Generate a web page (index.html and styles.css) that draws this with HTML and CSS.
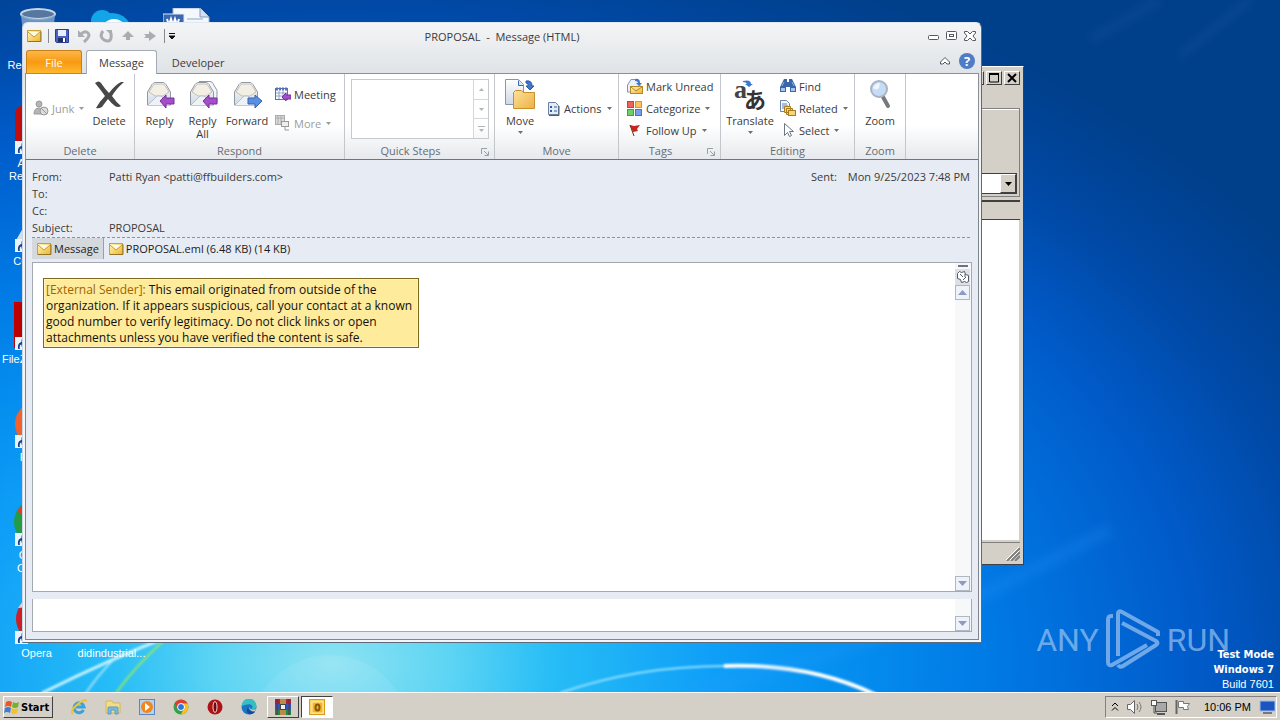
FILE: index.html
```html
<!DOCTYPE html>
<html lang="en">
<head>
    <meta charset="UTF-8">
    <meta name="viewport" content="width=device-width, initial-scale=1.0">
    <title>PROPOSAL - Message (HTML)</title>
    <link rel="stylesheet" href="styles.css">
</head>
<body>
    <!-- shared icons -->
    <svg class="sprite" aria-hidden="true">
        <defs>
            <linearGradient id="gold" x1="0" y1="0" x2="1" y2="1">
                <stop offset="0" stop-color="#fff6c4"/>
                <stop offset="1" stop-color="#f0b429"/>
            </linearGradient>
            <linearGradient id="paper" x1="0" y1="0" x2="0" y2="1">
                <stop offset="0" stop-color="#ffffff"/>
                <stop offset="1" stop-color="#cfd8e4"/>
            </linearGradient>
            <linearGradient id="folder" x1="0" y1="0" x2="1" y2="1">
                <stop offset="0" stop-color="#fde29a"/>
                <stop offset="1" stop-color="#eeb044"/>
            </linearGradient>
            <symbol id="mail" viewBox="0 0 16 16">
                <rect x="1.500" y="2.500" width="13" height="11" fill="url(#gold)" stroke="#c9a23c"/>
                <path d="M2 4l6 5 6-5" fill="#fffbe0" stroke="#c89a2c"/>
                <path d="M2 13.500h13v-10" stroke="#8f7428" fill="none"/>
            </symbol>
            <symbol id="down" viewBox="0 0 5 3">
                <path d="M0 0h5L2.500 3z" fill="currentColor"/>
            </symbol>
            <symbol id="open-mail" viewBox="0 0 32 32">
                <path d="M3.500 13L8 5.500Q9 4 11 3.500h8q2 .5 3 2l4.500 7.500v13h-23z" fill="url(#paper)" stroke="#8e98a5"/>
                <path d="M5 13l4-6.500q1-1.500 3-1.500h6q2 0 3 1.500l4 6.500-6 4h-8z" fill="#f3efe4" stroke="#c4bfb0"/>
                <path d="M4 26l9-9h4l9 9" fill="#eef2f7" stroke="#b6c0cd"/>
            </symbol>
            <symbol id="launcher" viewBox="0 0 8 8">
                <path d="M.5 6V.5H6M3 3l4 4M7.500 3.500v4h-4" fill="none" stroke="currentColor"/>
            </symbol>
            <symbol id="shortcut" viewBox="0 0 12 12">
                <rect width="12" height="12" fill="#e8f4fc"/>
                <path d="M3 11C2 7 4 5 6 4.500V2l4.500 3.500L6 9V7C4.500 7 4 9 4.500 11z" fill="#173c8c"/>
            </symbol>
        </defs>
    </svg>

    <main class="desktop">
        <svg class="wallpaper" viewBox="0 0 1280 693" preserveAspectRatio="none" aria-hidden="true">
            <defs>
                <filter id="soft"><feGaussianBlur stdDeviation="1"/></filter>
                <filter id="glow"><feGaussianBlur stdDeviation="5"/></filter>
            </defs>
            <circle cx="330" cy="736" r="80" fill="#fff" opacity=".08"/>
            <g fill="none" stroke="#c8f4ff" filter="url(#soft)">
                <path d="M172 636Q110 660 42 694" stroke-width="3"/>
                <path d="M116 658Q98 676 86 694" stroke-width="2" opacity=".7"/>
                <path d="M168 638Q138 664 116 694" stroke="#8fe86a" stroke-width="2"/>
                <path d="M560 694Q640 666 732 667" stroke="#8fe0ff" stroke-width="2"/>
                <path d="M724 667Q810 664 876 696" stroke="#fff" stroke-width="4"/>
            </g>
            <g fill="none" stroke="#2f9bff" filter="url(#glow)" opacity=".18">
                <path d="M690 694Q820 660 900 630T1110 530" stroke-width="14"/>
                <path d="M1180 56L1250 0" stroke="#8cb8e0" stroke-width="3"/>
                <path d="M1090 40L1160 0" stroke="#3a70b4" stroke-width="8"/>
            </g>
        </svg>

        <div class="icons">
            <div class="shortcut">
                <svg viewBox="0 0 48 48"><ellipse cx="25" cy="6" rx="17" ry="5" fill="#56779f" stroke="#c8d6e4" stroke-width="2"/><path d="M8 7l4 38q13 5 26 0l4-38q-17 8-34 0z" fill="#7fa3c8" opacity=".85"/></svg>
                <span>Recycle Bin</span>
            </div>
            <div class="shortcut">
                <svg viewBox="0 0 48 48"><rect x="2" y="0" width="44" height="46" rx="7" fill="#c00d0d"/><use href="#shortcut" x="2" y="35" width="13" height="13"/></svg>
                <span>Acrobat Reader DC</span>
            </div>
            <div class="shortcut">
                <svg viewBox="0 0 48 48"><path d="M2 38L10 24h30l6 14z" fill="#d7dde2"/><use href="#shortcut" x="2" y="35" width="13" height="13"/></svg>
                <span>CCleaner</span>
            </div>
            <div class="shortcut">
                <svg viewBox="0 0 48 48"><rect x="1" y="0" width="46" height="46" fill="#bf0000"/><use href="#shortcut" x="2" y="35" width="13" height="13"/></svg>
                <span>FileZilla Client</span>
            </div>
            <div class="shortcut">
                <svg viewBox="0 0 48 48"><circle cx="25" cy="24" r="23" fill="#f2622c"/><use href="#shortcut" x="2" y="35" width="13" height="13"/></svg>
                <span>Firefox</span>
            </div>
            <div class="shortcut">
                <svg viewBox="0 0 48 48"><circle cx="24" cy="24" r="23" fill="#259b45"/><path d="M4 13Q13 0 24 1q15 0 20 12H24q-8 0-11 8z" fill="#e33b2e"/><use href="#shortcut" x="2" y="35" width="13" height="13"/></svg>
                <span>Google Chrome</span>
            </div>
            <div class="shortcut">
                <svg viewBox="0 0 48 48"><ellipse cx="25" cy="23" rx="22" ry="23" fill="#cc2027"/><path d="M5 12Q12 0 25 0v10z" fill="#f3c9c9"/><use href="#shortcut" x="2" y="35" width="13" height="13"/></svg>
                <span>Opera</span>
            </div>
            <div class="shortcut">
                <svg viewBox="0 0 48 48"><circle cx="24" cy="25" r="20" fill="#12a5e8"/><circle cx="14" cy="13" r="11" fill="#12a5e8"/><circle cx="26" cy="24" r="13" fill="#fff"/></svg>
            </div>
            <div class="shortcut last-row">
                <svg viewBox="0 0 48 48"></svg>
                <span>didindustrial...</span>
            </div>
            <div class="shortcut third">
                <svg viewBox="0 0 48 48"><path d="M10 0h27l9 9v37H10z" fill="#f4f8fd" stroke="#9db4d4"/><path d="M37 0v9h9" fill="#d4e0f0" stroke="#7f98bd"/><rect x="0" y="6" width="21" height="20" fill="#3c66b0" stroke="#dce7f6"/><path d="M4 11l2 6 2-6 2 6 2-6 2 6 2-6" fill="none" stroke="#fff" stroke-width="2"/><path d="M24 11h16" stroke="#8ea5c6"/></svg>
            </div>
        </div>

        <section class="classic-window">
            <div class="classic-title">
                <button type="button" aria-label="Minimize"><svg viewBox="0 0 12 10"><path d="M2 8h6" stroke="#000" stroke-width="2"/></svg></button>
                <button type="button" aria-label="Maximize"><svg viewBox="0 0 12 10"><path d="M1.500 1h9v8h-9z" fill="none" stroke="#000"/><path d="M1 1h10" stroke="#000" stroke-width="2"/></svg></button>
                <button type="button" aria-label="Close"><svg viewBox="0 0 12 10"><path d="M2 1l8 8M10 1L2 9" stroke="#000" stroke-width="2"/></svg></button>
            </div>
            <div class="classic-panel">
                <div class="combo">
                    <select aria-label="Address"><option></option></select>
                    <span class="combo-arrow"><svg viewBox="0 0 7 4"><path d="M0 0h7L3.500 4z"/></svg></span>
                </div>
            </div>
            <div class="classic-columns"></div>
            <div class="classic-list"></div>
            <div class="classic-status"><svg viewBox="0 0 14 14"><path d="M1 14L14 1M5 14l9-9M9 14l5-5" stroke="#808080" stroke-width="2"/><path d="M0 13L13 0M4 13l9-9" stroke="#fff"/></svg></div>
        </section>

        <section class="window">
            <header class="titlebar">
                <div class="quick-access">
                    <svg class="icon16" viewBox="0 0 16 16"><use href="#mail"/></svg>
                    <span class="divider"></span>
                    <button type="button" aria-label="Save"><svg class="icon16" viewBox="0 0 16 16"><path d="M1.500 1.500h13v13h-12l-1-1z" fill="#4b62c4" stroke="#2b3c92"/><rect x="4" y="2" width="8" height="6" fill="#e6efff"/><rect x="4" y="10" width="8" height="4" fill="#222d62"/><rect x="9" y="10" width="2" height="4" fill="#fff"/></svg></button>
                    <button type="button" aria-label="Undo"><svg class="icon16" viewBox="0 0 16 16"><path d="M5 6q4-4 7-1t-4 9" fill="none" stroke="#a9adb2" stroke-width="3"/><path d="M2 2v7h7z" fill="#a9adb2"/></svg></button>
                    <button type="button" aria-label="Redo"><svg class="icon16" viewBox="0 0 16 16"><path d="M5 3q-3 4-1 7t6 3 3-8" fill="none" stroke="#a9adb2" stroke-width="3"/><path d="M8 2h6v6z" fill="#a9adb2"/></svg></button>
                    <button type="button" aria-label="Previous item"><svg class="icon16" viewBox="0 0 16 16"><path d="M8 3l6 6h-4v3H6V9H2z" fill="#a9adb2"/></svg></button>
                    <button type="button" aria-label="Next item"><svg class="icon16" viewBox="0 0 16 16"><path d="M2 6h5V3l7 5-7 5v-3H2l2-2z" fill="#a9adb2"/></svg></button>
                    <span class="divider"></span>
                    <button type="button" class="customize" aria-label="Customize"><svg viewBox="0 0 8 8"><path d="M1 1.500h6M1 4h6L4 7z" fill="#111" stroke="#111"/></svg></button>
                </div>
                <h1>PROPOSAL&nbsp; -&nbsp; Message (HTML)</h1>
                <div class="window-buttons">
                    <button type="button" aria-label="Minimize"><svg viewBox="0 0 12 12"><rect x=".5" y="5.500" width="10" height="4" rx="1" fill="#fff" stroke="#535a63"/></svg></button>
                    <button type="button" aria-label="Maximize"><svg viewBox="0 0 12 12"><rect x=".5" y="1.500" width="10" height="8" rx="1" fill="#fff" stroke="#535a63"/><rect x="3.500" y="4.500" width="4" height="2" fill="#fff" stroke="#535a63"/></svg></button>
                    <button type="button" aria-label="Close"><svg viewBox="0 0 12 12"><path d="M.5 1.500h3L6 4l2.500-2.500h3V3L9 6l2.500 3v1.500h-3L6 8l-2.500 2.500h-3V9L3 6 .5 3z" fill="#fff" stroke="#535a63"/></svg></button>
                </div>
            </header>

            <nav class="tabs">
                <button type="button" class="tab file">File</button>
                <button type="button" class="tab active">Message</button>
                <button type="button" class="tab">Developer</button>
                <div class="tab-tools">
                    <button type="button" aria-label="Collapse ribbon"><svg viewBox="0 0 10 8"><path d="M.5 5L5 .500 9.500 5v2H7L5 5 3 7H.5z" fill="#fff" stroke="#535a63"/></svg></button>
                    <button type="button" class="help" aria-label="Help">?</button>
                </div>
            </nav>

            <div class="ribbon">
                <section class="group g-delete">
                    <div class="tools">
                        <button type="button" class="small disabled"><svg class="icon16" viewBox="0 0 16 16"><circle cx="6" cy="4" r="3" fill="#b5b5b5" stroke="#999"/><path d="M1 14q0-6 5-6 4 0 5 6z" fill="#b5b5b5" stroke="#999"/><circle cx="11" cy="11" r="4" fill="#ddd" stroke="#999"/><path d="M8 8l6 6" stroke="#999"/></svg>Junk<svg class="arrow"><use href="#down"/></svg></button>
                        <button type="button" class="large"><svg viewBox="0 0 32 32"><path d="M2 4q4-3 6 0 4 6 8 10Q22 6 28 3l3 0Q23 10 19 17q4 6 9 10-3 2-6 0-4-3-7-7-4 5-6 8-4 2-6 1 4-7 9-12Q7 10 2 4z" fill="#484848"/></svg>Delete</button>
                    </div>
                    <h2>Delete</h2>
                </section>
                <section class="group g-respond">
                    <div class="tools">
                        <button type="button" class="large"><svg viewBox="0 0 32 32"><use href="#open-mail"/><path d="M16 22l6-6v3h8v6h-8v4z" fill="#a24fc8" stroke="#7a2fa0"/></svg>Reply</button>
                        <button type="button" class="large"><svg viewBox="0 0 32 32"><path d="M12 2.500h11q2 0 3 2l4 7v12h-6V12l-6-8z" fill="#f4f6f9" stroke="#8e98a5"/><use href="#open-mail"/><path d="M16 22l6-6v3h8v6h-8v4z" fill="#a24fc8" stroke="#7a2fa0"/></svg>Reply All</button>
                        <button type="button" class="large forward"><svg viewBox="0 0 32 32"><use href="#open-mail"/><path d="M31 22l-7-6v3h-7v6h7v4z" fill="#5b8fe0" stroke="#3463b4"/></svg>Forward</button>
                        <div class="stack spread">
                            <button type="button" class="small"><svg class="icon16" viewBox="0 0 16 16"><rect x=".5" y="2.500" width="12" height="11" fill="#fff" stroke="#5a6fb4"/><path d="M1 3h11" stroke="#5a6fb4" stroke-width="3" stroke-dasharray="2 1"/><path d="M1 7h11M1 10h11M4 5v8M8 5v8" stroke="#8fa0d4"/><path d="M7 11l4-4v2h5v4h-5v2z" fill="#a24fc8" stroke="#7a2fa0"/></svg>Meeting</button>
                            <button type="button" class="small disabled"><svg class="icon16" viewBox="0 0 16 16"><rect x=".5" y=".5" width="9" height="9" fill="#ddd" stroke="#aaa"/><path d="M1 3h8M3 1v8M6 1v8" stroke="#aaa"/><rect x="6.500" y="6.500" width="7" height="5" fill="#eee" stroke="#999"/><path d="M10 12v3h4" fill="none" stroke="#999"/></svg>More<svg class="arrow"><use href="#down"/></svg></button>
                        </div>
                    </div>
                    <h2>Respond</h2>
                </section>
                <section class="group g-steps">
                    <div class="tools">
                        <div class="gallery">
                            <div class="gallery-list"></div>
                            <div class="gallery-nav">
                                <button type="button" aria-label="Row up"><svg class="arrow flip"><use href="#down"/></svg></button>
                                <button type="button" aria-label="Row down"><svg class="arrow"><use href="#down"/></svg></button>
                                <button type="button" class="more" aria-label="More steps"><svg class="arrow"><use href="#down"/></svg></button>
                            </div>
                        </div>
                    </div>
                    <h2>Quick Steps</h2>
                    <svg class="launcher"><use href="#launcher"/></svg>
                </section>
                <section class="group g-move">
                    <div class="tools">
                        <button type="button" class="large"><svg viewBox="0 0 32 32"><path d="M1.500.5h13l5 5v20h-18z" fill="url(#paper)" stroke="#8596ad"/><path d="M14.500 1.500v5h5" fill="#d7e4f5" stroke="#3a6ab0"/><path d="M22 2q6-1 6 5h2l-4 4-4-4h2q1-3-2-3z" fill="#3f77d0" stroke="#2a56a0"/><path d="M9.500 13.500l2-2h6l2 2h11v16h-21z" fill="url(#folder)" stroke="#c98f2c"/></svg>Move<svg class="arrow"><use href="#down"/></svg></button>
                        <button type="button" class="small"><svg class="icon16" viewBox="0 0 16 16"><path d="M3.500 2.500h7l3 3v9h-10z" fill="#e4ecf6" stroke="#6c7f9c"/><path d="M4 15.500h10V6" fill="none" stroke="#4c5c76"/><rect x="5" y="6" width="2" height="2" fill="#2e5da8"/><rect x="5" y="10" width="2" height="2" fill="#2e5da8"/><path d="M9 7h3M9 11h3" stroke="#2e5da8"/></svg>Actions<svg class="arrow"><use href="#down"/></svg></button>
                    </div>
                    <h2>Move</h2>
                </section>
                <section class="group g-tags">
                    <div class="tools">
                        <div class="stack">
                            <button type="button" class="small"><svg class="icon16" viewBox="0 0 16 16"><path d="M.5 7L4 1.500h6L13 7v7H.5z" fill="#eaf1fb" stroke="#7f95b4"/><path d="M8 1q5-1 5 4h2l-3 3-3-3h2q0-2-3-2z" fill="#3f77d0"/><rect x="3.500" y="8.500" width="12" height="7" fill="url(#gold)" stroke="#b08a2a"/><path d="M4 9l5 4 6-4" fill="none" stroke="#b08a2a"/></svg>Mark Unread</button>
                            <button type="button" class="small"><svg class="icon16" viewBox="0 0 16 16"><rect x=".5" y="1.500" width="6" height="6" fill="#f0605c" stroke="#d03c3c"/><rect x="8.500" y="1.500" width="6" height="6" fill="#fbc25a" stroke="#dc9626"/><rect x=".5" y="9.500" width="6" height="6" fill="#6fd06a" stroke="#3aa43a"/><rect x="8.500" y="9.500" width="6" height="6" fill="#7d9cec" stroke="#4c6fcc"/></svg>Categorize<svg class="arrow"><use href="#down"/></svg></button>
                            <button type="button" class="small"><svg class="icon16" viewBox="0 0 16 16"><path d="M3 3l4 1 6-1-3 4 1 2-5 1z" fill="#c4281c"/><path d="M3 3l4 11" stroke="#7a2018"/></svg>Follow Up<svg class="arrow"><use href="#down"/></svg></button>
                        </div>
                    </div>
                    <h2>Tags</h2>
                    <svg class="launcher"><use href="#launcher"/></svg>
                </section>
                <section class="group g-editing">
                    <div class="tools">
                        <button type="button" class="large"><svg class="translate" viewBox="0 0 32 32"><text x="0" y="19" class="glyph-a">a</text><text x="10" y="29" class="glyph-kana">あ</text><path d="M9 2q8-2 8 3h2l-4 3-4-3h2q-1-2-4-2z" fill="#3f77d0"/></svg>Translate<svg class="arrow"><use href="#down"/></svg></button>
                        <div class="stack">
                            <button type="button" class="small"><svg class="icon16" viewBox="0 0 16 16"><path d="M4 1h3v3h2V1h3l4 8v5h-6V9H6v5H0V9z" fill="#3b66ac"/><rect x="1" y="10" width="4" height="3" fill="#a8c6ee"/><rect x="11" y="10" width="4" height="3" fill="#a8c6ee"/><path d="M4 4l-2 4M12 4l2 4" stroke="#8fb2e4"/></svg>Find</button>
                            <button type="button" class="small"><svg class="icon16" viewBox="0 0 16 16"><path d="M.5.5h6l3 3v8h-9z" fill="#f4f8fd" stroke="#6b84aa"/><path d="M2 4h5M2 6h6M2 8h5" stroke="#5a80bc"/><path d="M4.500 6.500h6v6h-6zM6.500 8.500h6v6h-6z" fill="#f8d477" stroke="#a87c1c"/><rect x="8.500" y="10.500" width="7" height="5" fill="#f8d477" stroke="#a87c1c"/></svg>Related<svg class="arrow"><use href="#down"/></svg></button>
                            <button type="button" class="small"><svg class="icon16" viewBox="0 0 16 16"><path d="M4.500 1.500v12l3-3 2 4 2-1-2-4h4z" fill="#fff" stroke="#6a7686"/></svg>Select<svg class="arrow"><use href="#down"/></svg></button>
                        </div>
                    </div>
                    <h2>Editing</h2>
                </section>
                <section class="group g-zoom">
                    <div class="tools">
                        <button type="button" class="large"><svg viewBox="0 0 32 32"><path d="M19 18l5 9" stroke="#77797d" stroke-width="4" stroke-linecap="round"/><circle cx="15" cy="10" r="8" fill="#c5dcf6" stroke="#a9b4c3" stroke-width="2"/><path d="M9 9q2-5 7-5l-1 5q-3 3-6 0z" fill="#eef6ff"/></svg>Zoom</button>
                    </div>
                    <h2>Zoom</h2>
                </section>
            </div>

            <div class="content">
                <dl class="headers">
                    <dt>From:</dt>
                    <dd>Patti Ryan &lt;patti@ffbuilders.com&gt;<span class="sent"><span>Sent:</span><span>Mon 9/25/2023 7:48 PM</span></span></dd>
                    <dt>To:</dt>
                    <dd></dd>
                    <dt>Cc:</dt>
                    <dd></dd>
                    <dt>Subject:</dt>
                    <dd>PROPOSAL</dd>
                </dl>
                <div class="attachments">
                    <button type="button" class="selected"><svg class="icon16" viewBox="0 0 16 16"><use href="#mail"/></svg>Message</button>
                    <button type="button"><svg class="icon16" viewBox="0 0 16 16"><use href="#mail"/></svg>PROPOSAL.eml (6.48 KB) (14 KB)</button>
                </div>
                <div class="message">
                    <article>
                        <p class="warning"><span>[External Sender]:</span> This email originated from outside of the organization. If it appears suspicious, call your contact at a known good number to verify legitimacy. Do not click links or open attachments unless you have verified the content is safe.</p>
                    </article>
                    <div class="scrollbar">
                        <div class="split"></div>
                        <button type="button" class="ruler" aria-label="Select browse object"><svg viewBox="0 0 14 14"><path d="M1.500 3.500l2-2 2 1 3-1 1 3 3 1v6l-2 1-2-1-3 1-1-3-3-1z" fill="#fff" stroke="#535a63"/><path d="M4 4l3 3M7 10l3-3M9 4v3" stroke="#535a63"/></svg></button>
                        <button type="button" aria-label="Scroll up"><svg viewBox="0 0 9 5"><path d="M0 5h9L4.500 0z"/></svg></button>
                        <div class="track"></div>
                        <button type="button" aria-label="Scroll down"><svg viewBox="0 0 9 5"><path d="M0 0h9L4.500 5z"/></svg></button>
                    </div>
                </div>
                <div class="people-pane">
                    <article></article>
                    <div class="scrollbar">
                        <div class="track"></div>
                        <button type="button" aria-label="Scroll down"><svg viewBox="0 0 9 5"><path d="M0 0h9L4.500 5z"/></svg></button>
                    </div>
                </div>
            </div>
        </section>

        <div class="watermark">
            <span>ANY</span>
            <svg viewBox="0 0 56 62"><path d="M8 7H6q-3 0-3 4v42q0 4 4 3L42 36" fill="none" stroke="currentColor" stroke-width="4" stroke-linejoin="round"/><path d="M13 47V5q0-4 4-2l36 20v4" fill="none" stroke="currentColor" stroke-width="4" stroke-linejoin="round"/><path d="M17 14l34 18q3 2 0 4L18 57q-3 2-5-1" fill="none" stroke="currentColor" stroke-width="4" stroke-linejoin="round"/></svg>
            <span>RUN</span>
        </div>
        <div class="build">
            <strong>Test Mode</strong>
            <strong>Windows 7</strong>
            <span>Build 7601</span>
        </div>
    </main>

    <footer class="taskbar">
        <button type="button" class="start"><svg viewBox="0 0 16 16"><path d="M2 3q3-2 6 0L7 8Q4 6 1 8z" fill="#e8562a"/><path d="M9 3q3 2 6 0l-1 5q-3 2-6 0z" fill="#6fb52c"/><path d="M1 9q3-2 6 0l-1 5q-3-2-6 0z" fill="#3b7fd4"/><path d="M8 9q3 2 6 0l-1 5q-3 2-6 0z" fill="#f5c02c"/></svg>Start</button>
        <div class="launch">
            <button type="button" aria-label="Internet Explorer"><svg viewBox="0 0 16 16"><path d="M12.500 11A5 5 0 1 1 13 8H5" fill="none" stroke="#3aa3dc" stroke-width="3"/><path d="M2 15Q-2 12 7 5t8-2" fill="none" stroke="#f0c23a" stroke-width="2"/></svg></button>
            <button type="button" aria-label="Explorer"><svg viewBox="0 0 16 16"><path d="M1 2h6l1 2h7v10H1z" fill="#f5dd85" stroke="#d5b858"/><path d="M3 15V9q0-1 1-1h8q1 0 1 1v6h-3v-4H6v4z" fill="#79bbdf" stroke="#5a9ac4"/></svg></button>
            <button type="button" aria-label="Media Player"><svg viewBox="0 0 16 16"><rect x=".5" y=".5" width="15" height="15" fill="#b7d2ee" stroke="#5c87bc"/><circle cx="8" cy="8" r="6" fill="#f2861c"/><path d="M6 4l5 4-5 4z" fill="#fff"/></svg></button>
            <button type="button" aria-label="Chrome"><svg viewBox="0 0 16 16"><circle cx="8" cy="8" r="7.500" fill="#34a04a"/><path d="M1.500 4.500A7.500 7.500 0 0 1 14.500 4.500H8L5 10z" fill="#e33b2e"/><path d="M14.500 4.500A7.500 7.500 0 0 1 8 15.500L11 9 8 4.500z" fill="#fbc116"/><circle cx="8" cy="8" r="3.500" fill="#2f73dc" stroke="#fff"/></svg></button>
            <button type="button" aria-label="Opera"><svg viewBox="0 0 16 16"><circle cx="8" cy="8" r="7.500" fill="#b01116"/><ellipse cx="8" cy="8" rx="2" ry="5.500" fill="#6c0a10" stroke="#f4d4d4"/></svg></button>
            <button type="button" aria-label="Edge"><svg viewBox="0 0 16 16"><circle cx="8" cy="8" r="7.500" fill="#1c75c4"/><path d="M.5 7a7.500 7.500 0 0 1 15 0q0 4-5 3 2-2 0-4T.5 7z" fill="#35bfc0"/><path d="M7 8q0 5 7 5-3 3-6 2-4-2-1-7z" fill="#0f4d9c"/><path d="M8 8q2 4 7 2l-1 2q-5 1-6-4z" fill="#d4d0c8"/></svg></button>
            <button type="button" class="raised" aria-label="WinRAR"><svg viewBox="0 0 16 16"><path d="M0 0h16v5H0z" fill="#a8243c"/><path d="M0 5h16v6H0z" fill="#2f55b8"/><path d="M0 11h16v5H0z" fill="#23864a"/><rect x="5" width="6" height="16" fill="#b98a48"/><rect x="5.500" y="5.500" width="5" height="5" fill="#eee" stroke="#444"/><path d="M2 0v16M14 0v16" stroke="#6d2c40"/></svg></button>
            <button type="button" class="pressed" aria-label="Outlook"><svg viewBox="0 0 16 16"><rect x=".5" y=".5" width="15" height="15" fill="#fbd25c" stroke="#d99a14"/><rect x="3" y="3" width="11" height="11" fill="#f4b325" stroke="#fff0b8"/><ellipse cx="8.500" cy="8.500" rx="2" ry="3" fill="none" stroke="#8a5606" stroke-width="2"/></svg></button>
        </div>
        <div class="tray">
            <svg viewBox="0 0 8 10"><path d="M1 4l3-3 3 3M1 8.500l3-3 3 3" fill="none" stroke="#000"/></svg>
            <svg class="tray-icon" viewBox="0 0 16 16"><path d="M.5 5.500h3l4-4v13l-4-4h-3z" fill="#fff" stroke="#666"/><path d="M10 5q2 3 0 6M12 3q4 5 0 10" fill="none" stroke="#777"/></svg>
            <svg class="tray-icon" viewBox="0 0 16 16"><rect x="4.500" y="3.500" width="11" height="9" fill="#a8a8a8" stroke="#555"/><path d="M6 15h8" stroke="#555" stroke-width="2"/><rect x=".5" y="1.500" width="5" height="5" fill="#fff" stroke="#555"/><path d="M3 7v7h3" fill="none" stroke="#555"/></svg>
            <svg class="tray-icon" viewBox="0 0 16 16"><path d="M1.500 1v14" stroke="#666" stroke-width="2"/><path d="M3.500 2.500h5v2h6l-2 3 1 3h-5v-2h-5z" fill="#fff" stroke="#777"/></svg>
            <time>10:06 PM</time>
            <svg class="tray-icon" viewBox="0 0 16 16"><rect x="1" y="2" width="15" height="10" fill="#1c55c0" stroke="#9ebcec"/><path d="M4 14h9" stroke="#777" stroke-width="2"/></svg>
        </div>
    </footer>
</body>
</html>
```
FILE: styles.css
```css
* {
    box-sizing: border-box;
}
body {
    margin: 0;
    height: 100vh;
    display: flex;
    flex-direction: column;
    overflow: hidden;
    font-family: "Open Sans", "Noto Sans", sans-serif;
    font-size: 11px;
    line-height: 13px;
    color: #3b3b3b;
}
button, select {
    font: inherit;
    color: inherit;
    padding: 0;
    border: none;
    background: none;
}
h1, h2, p, dl, dd {
    margin: 0;
    font-size: 11px;
    font-weight: normal;
}
svg {
    display: block;
    flex: none;
}
.sprite {
    position: absolute;
    width: 0;
    height: 0;
}
.icon16 {
    width: 16px;
    height: 16px;
}
.arrow {
    width: 5px;
    height: 3px;
    color: #707070;
}

/* Desktop */
.desktop {
    flex: 1;
    position: relative;
    overflow: hidden;
    background: radial-gradient(78% 95% at 26% 96%, #8fe3f2 0%, #5cd4f4 12%, #27bdf6 22%, #0f9ff8 38%, #0590f0 50%, #0078e4 67%, #005ac8 87%, #0049a6 100%, #003f8a 115%);
}
.wallpaper {
    position: absolute;
    width: 100%;
    height: 100%;
}
.icons {
    position: absolute;
    top: 0;
    left: -1px;
    display: grid;
    grid-auto-flow: column;
    grid-template-rows: repeat(7, 98px);
    grid-auto-columns: 75px;
}
.shortcut {
    display: flex;
    flex-direction: column;
    align-items: center;
    gap: 3px;
    padding-top: 8px;
    font-family: "Liberation Sans", sans-serif;
    color: #fff;
    text-align: center;
}
.shortcut svg {
    width: 48px;
    height: 48px;
}
.last-row {
    grid-row: 7;
}
.third {
    grid-column: 3;
    grid-row: 1;
}
.watermark {
    position: absolute;
    right: 50px;
    bottom: 21px;
    display: flex;
    align-items: center;
    gap: 6px;
    font-family: "Roboto", sans-serif;
    font-size: 32px;
    line-height: 62px;
    color: rgba(170, 205, 245, 0.65);
}
.watermark svg {
    width: 56px;
    height: 62px;
}
.build {
    position: absolute;
    right: 6px;
    bottom: 0;
    display: flex;
    flex-direction: column;
    align-items: flex-end;
    font-family: "Liberation Sans", sans-serif;
    line-height: 15px;
    color: #fff;
}
.build strong {
    font-family: "DejaVu Sans Condensed", "DejaVu Sans", sans-serif;
}

/* Classic window behind the message */
.classic-window {
    position: absolute;
    top: 66px;
    left: 30%;
    width: 50%;
    bottom: 127px;
    display: flex;
    flex-direction: column;
    padding: 3px;
    background: #d4d0c8;
    border: 1px solid #404040;
    border-top-color: #fff;
}
.classic-title {
    display: flex;
    justify-content: flex-end;
    gap: 2px;
    height: 38px;
    padding: 1px 0 0;
}
.classic-title button, .combo-arrow {
    display: flex;
    align-items: center;
    justify-content: center;
    width: 16px;
    height: 14px;
    background: #d4d0c8;
    border: 1px solid #404040;
    border-top-color: #fff;
    border-left-color: #fff;
}
.classic-title svg {
    width: 12px;
    height: 10px;
}
.classic-panel {
    display: flex;
    flex-direction: column;
    justify-content: flex-end;
    height: 89px;
    padding: 2px;
    border: 1px solid #808080;
    box-shadow: inset 1px 1px #fff;
}
.combo {
    display: flex;
    height: 21px;
    background: #fff;
    border: 1px solid #404040;
}
.combo select {
    flex: 1;
    appearance: none;
}
.combo-arrow {
    height: 19px;
}
.combo-arrow svg {
    width: 7px;
    height: 4px;
}
.classic-columns {
    height: 20px;
    margin-top: 3px;
    border-top: 2px solid #404040;
    border-bottom: 1px solid #404040;
}
.classic-list {
    flex: 1;
    background: #fff;
    border-right: 1px solid #d4d0c8;
}
.classic-status {
    display: flex;
    justify-content: flex-end;
    align-items: flex-end;
    height: 19px;
    margin-top: 2px;
    border-top: 1px solid #808080;
}
.classic-status svg {
    width: 14px;
    height: 14px;
}

/* Message window */
.window {
    position: absolute;
    top: 22px;
    left: 22px;
    width: 75%;
    bottom: 49px;
    display: flex;
    flex-direction: column;
    padding: 1px 2px 2px;
    border: 1px solid #5b6b7d;
    border-top-color: #dfe8f2;
    border-left-color: #c8d6e6;
    border-radius: 6px 6px 0 0;
    background: linear-gradient(#f4f5f6, #dfe3e7 50px, #f4f5f6 90px);
}
.titlebar {
    display: grid;
    grid-template-columns: 1fr auto 1fr;
    align-items: center;
    height: 26px;
    padding-bottom: 2px;
}
.quick-access {
    display: flex;
    align-items: center;
    gap: 6px;
    padding-left: 1px;
}
.divider {
    width: 1px;
    height: 14px;
    background: #85898e;
}
.divider + button {
    margin-left: -1px;
}
.divider + .customize {
    margin-left: -3px;
}
.customize svg {
    width: 8px;
    height: 8px;
}
.window-buttons {
    display: flex;
    justify-content: flex-end;
    gap: 6px;
    padding-right: 3px;
}
.window-buttons svg {
    width: 12px;
    height: 12px;
}
.tabs {
    display: flex;
    height: 24px;
    padding-left: 1px;
}
.tab {
    padding: 0 12px 1px;
    border: 1px solid transparent;
    border-bottom: none;
}
.tab.file {
    width: 56px;
    height: 23px;
    margin-right: 4px;
    padding-bottom: 0;
    color: #fff;
    background: linear-gradient(#fdb64a, #f79a12 50%, #ffb92e);
    border-color: #c77f1a;
    border-radius: 3px 3px 0 0;
}
.tab.active {
    position: relative;
    z-index: 1;
    margin-right: 2px;
    background: #fff;
    border-color: #a5abb2;
    border-radius: 3px 3px 0 0;
}
.tab-tools {
    display: flex;
    align-items: center;
    gap: 9px;
    margin-left: auto;
    padding: 0 4px 2px 0;
}
.tab-tools svg {
    width: 10px;
    height: 8px;
}
.help {
    width: 16px;
    height: 16px;
    border-radius: 8px;
    background: #4f7cc6;
    color: #fff;
    font-size: 13px;
    font-weight: bold;
    line-height: 16px;
}

/* Ribbon */
.ribbon {
    display: flex;
    height: 87px;
    margin-top: -1px;
    background: linear-gradient(#fff 60%, #e6e9ed);
    border: 1px solid #8b9097;
    border-bottom-color: #70757c;
}
.group {
    position: relative;
    display: flex;
    flex-direction: column;
    border-right: 1px solid #c3c7cc;
}
.group h2 {
    height: 16px;
    line-height: 16px;
    text-align: center;
    color: #666c74;
}
.tools {
    display: flex;
    align-items: flex-start;
    height: 70px;
    padding-top: 1px;
}
.g-delete {
    width: 109px;
}
.g-respond {
    width: 210px;
}
.g-steps {
    width: 150px;
}
.g-move {
    width: 124px;
}
.g-tags {
    width: 102px;
}
.g-editing {
    width: 134px;
}
.g-zoom {
    width: 51px;
}
.g-steps h2, .g-tags h2 {
    padding-right: 18px;
}
.large {
    display: flex;
    flex-direction: column;
    align-items: center;
    width: 50px;
    padding-top: 4px;
}
.large > svg:first-child {
    width: 32px;
    height: 32px;
    margin-bottom: 3px;
}
.large .arrow {
    margin-top: 4px;
}
.g-respond .large {
    width: 43px;
}
.g-respond .forward {
    width: 46px;
}
.g-respond .tools {
    padding-left: 3px;
}
.small {
    display: flex;
    align-items: center;
    gap: 3px;
    height: 22px;
    white-space: nowrap;
}
.small .arrow {
    margin-left: 2px;
}
.tools > .small {
    margin-top: 22px;
}
.disabled, .disabled .arrow {
    color: #9c9c9c;
}
.g-delete .tools {
    padding-left: 7px;
}
.stack {
    padding-left: 8px;
}
.spread {
    display: flex;
    flex-direction: column;
    gap: 7px;
    padding: 8px 0 0 5px;
}
.g-editing .large {
    width: 58px;
}
.g-editing .stack {
    padding-left: 1px;
}
.translate {
    overflow: visible;
}
.glyph-a {
    font: bold 26px "Liberation Serif", serif;
    fill: #444;
}
.glyph-kana {
    font: bold 22px "Noto Sans CJK JP", sans-serif;
    fill: #333;
}
.gallery {
    display: flex;
    width: 138px;
    height: 60px;
    margin: 4px 0 0 6px;
    border: 1px solid #c6c9cd;
}
.gallery-list {
    flex: 1;
    background: #fff;
}
.gallery-nav {
    display: flex;
    flex-direction: column;
    width: 15px;
    border-left: 1px solid #d5d7da;
}
.gallery-nav button {
    flex: 1;
    display: flex;
    flex-direction: column;
    align-items: center;
    justify-content: center;
    border-bottom: 1px solid #d5d7da;
}
.gallery-nav .more {
    border-bottom: none;
}
.gallery-nav .more::before {
    content: "";
    width: 7px;
    height: 1px;
    margin-bottom: 2px;
    background: #b0b3b8;
}
.gallery-nav .arrow {
    color: #b0b3b8;
}
.flip {
    transform: rotate(180deg);
}
.launcher {
    position: absolute;
    right: 5px;
    bottom: 3px;
    width: 8px;
    height: 8px;
    color: #9a9fa6;
}

/* Message content */
.content {
    flex: 1;
    display: flex;
    flex-direction: column;
    padding: 8px 6px 7px;
    background: #e7ebf3;
    border: 1px solid #80868e;
    border-top: none;
}
.headers {
    display: grid;
    grid-template-columns: 77px 1fr;
    grid-auto-rows: 17px;
    margin-right: 2px;
    padding-bottom: 1px;
    line-height: 17px;
    border-bottom: 1px dashed #8d929b;
}
.headers dd {
    display: flex;
    justify-content: space-between;
}
.sent {
    display: flex;
    gap: 11px;
}
.attachments {
    display: flex;
    color: #1c1c1c;
}
.attachments button {
    display: flex;
    align-items: center;
    gap: 2px;
    height: 21px;
    padding: 0 4px;
}
.attachments .selected {
    background: #d5d8dc;
    border-right: 1px solid #9a9fa6;
}
.message, .people-pane {
    display: flex;
    background: #fff;
    border: 1px solid #a3a9b2;
}
.message {
    flex: 1;
    margin: 3px 0 7px;
}
.people-pane {
    height: 33px;
    border-top: none;
}
article {
    flex: 1;
    padding: 15px 10px;
}
.warning {
    width: 376px;
    padding: 3px 2px 1px;
    background: #ffeb9c;
    border: 1px solid #7f6a1c;
    box-shadow: inset 0 0 0 1px #fff3c4;
    font-size: 12px;
    line-height: 16px;
    color: #111;
}
.warning span {
    color: #9c6500;
}
.scrollbar {
    display: flex;
    flex-direction: column;
    width: 16px;
    background: #f7f8fa;
}
.scrollbar button {
    display: flex;
    align-items: center;
    justify-content: center;
    width: 15px;
    height: 15px;
    background: #eef2f9;
    border: 1px solid #b1b7c2;
    fill: #8f9bbd;
}
.scrollbar svg {
    width: 9px;
    height: 5px;
}
.scrollbar .ruler {
    height: 16px;
    border: none;
    background: #dde1e7;
}
.scrollbar .ruler svg {
    width: 14px;
    height: 14px;
}
.split {
    height: 6px;
    margin: 0 3px;
    background: linear-gradient(transparent 2px, #6d737c 2px, #6d737c 4px, transparent 4px);
}
.track {
    flex: 1;
}

/* Taskbar */
.taskbar {
    display: flex;
    align-items: center;
    height: 28px;
    padding: 1px 3px 0;
    background: #d4d0c8;
    border-top: 1px solid #fff;
    font-family: "Liberation Sans", sans-serif;
    color: #000;
}
.start {
    display: flex;
    align-items: center;
    gap: 1px;
    height: 22px;
    padding: 0 3px 0 0;
    font-family: "DejaVu Sans Condensed", "DejaVu Sans", sans-serif;
    font-weight: bold;
    border: 1px solid #404040;
    border-top-color: #fff;
    border-left-color: #fff;
}
.start svg, .launch svg, .tray-icon {
    width: 16px;
    height: 16px;
}
.launch {
    display: flex;
    gap: 2px;
    margin-left: 10px;
}
.launch button {
    display: flex;
    align-items: center;
    justify-content: center;
    width: 32px;
    height: 22px;
}
.launch .raised {
    border: 1px solid #404040;
    border-top-color: #fff;
    border-left-color: #fff;
}
.launch .pressed {
    background: #fff;
    border: 1px solid #fff;
    border-top-color: #404040;
    border-left-color: #404040;
}
.tray {
    display: flex;
    align-items: center;
    gap: 8px;
    height: 22px;
    margin-left: auto;
    padding: 0 1px 0 5px;
    border: 1px solid #fff;
    border-top-color: #808080;
    border-left-color: #808080;
}
.tray svg:first-child {
    width: 8px;
    height: 10px;
}
.tray time {
    padding-left: 5px;
}
```
